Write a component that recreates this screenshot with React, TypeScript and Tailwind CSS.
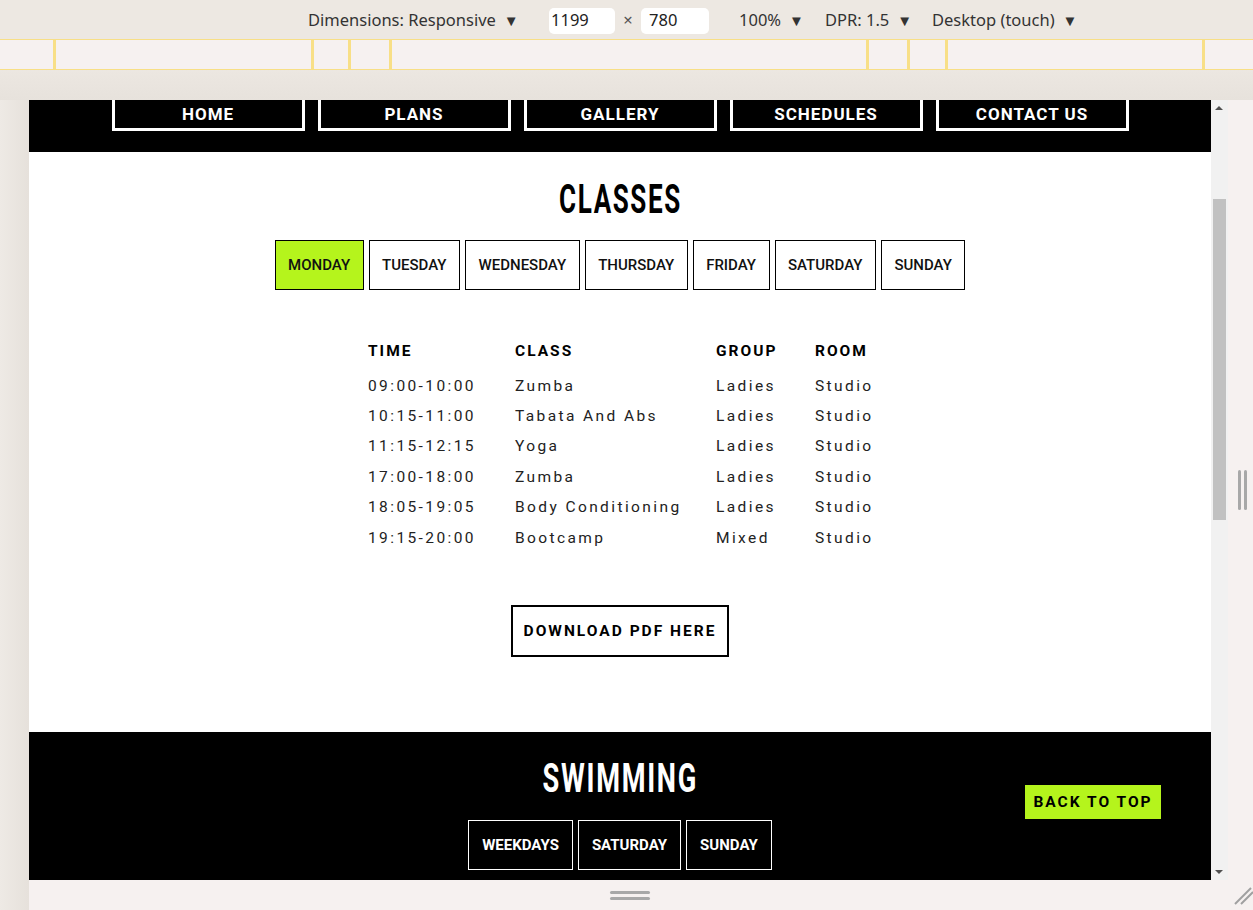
const navItems = ["HOME", "PLANS", "GALLERY", "SCHEDULES", "CONTACT US"];
const days = ["MONDAY", "TUESDAY", "WEDNESDAY", "THURSDAY", "FRIDAY", "SATURDAY", "SUNDAY"];
const rows = [
  ["09:00-10:00", "Zumba", "Ladies", "Studio"],
  ["10:15-11:00", "Tabata And Abs", "Ladies", "Studio"],
  ["11:15-12:15", "Yoga", "Ladies", "Studio"],
  ["17:00-18:00", "Zumba", "Ladies", "Studio"],
  ["18:05-19:05", "Body Conditioning", "Ladies", "Studio"],
  ["19:15-20:00", "Bootcamp", "Mixed", "Studio"],
];
const rulerMarks = [53, 311, 348, 389, 866, 907, 945, 1202];

function Caret() {
  return <span className="ml-[8px] text-[15px]">▼</span>;
}

function Toolbar() {
  return (
    <div className="flex h-[39px] items-center bg-[#ede8e2] pt-[2px] pl-[308px] font-['Noto_Sans',sans-serif] text-[16.5px] text-[#333]">
      <span className="w-[241px]">
        Dimensions: Responsive
        <Caret />
      </span>
      <span className="flex h-[26px] w-[66px] items-center rounded-[5px] bg-white pl-[2px] text-[#222]">1199</span>
      <span className="w-[26px] text-center text-[#555]">×</span>
      <span className="flex h-[26px] w-[68px] items-center rounded-[5px] bg-white pl-[8px] text-[#222]">780</span>
      <span className="ml-[30px] w-[86px]">
        100%
        <Caret />
      </span>
      <span className="w-[107px]">
        DPR: 1.5
        <Caret />
      </span>
      <span>
        Desktop (touch)
        <Caret />
      </span>
    </div>
  );
}

function Ruler() {
  return (
    <div className="relative h-[31px] border-y border-[#f8df86] bg-[#f6f1f0]">
      {rulerMarks.map((x) => (
        <div key={x} className="absolute top-0 h-full w-[2.5px] bg-[#f8df86]" style={{ left: x }} />
      ))}
    </div>
  );
}

function Classes() {
  return (
    <section className="flex flex-col items-center bg-white pt-[28px] pb-[75px]">
      <h2 className="inline-block h-[40px] scale-x-[0.65] font-['Roboto',sans-serif] text-[40px] leading-[40px] font-bold tracking-[2.5px] text-black">
        CLASSES
      </h2>
      <div className="mt-5 flex gap-[5px]">
        {days.map((d, i) => (
          <button
            key={d}
            className={`h-[50px] border border-black px-[12.5px] font-['Roboto',sans-serif] text-[15px] font-medium text-[#111] ${
              i === 0 ? "bg-[#b5f41c]" : "bg-white"
            }`}
          >
            {d}
          </button>
        ))}
      </div>
      <div className="mt-[50px] ml-[3px] font-['Roboto',sans-serif]">
        <div className="grid h-[24px] grid-cols-[147px_201px_99px_60px] items-center text-[15.5px] font-bold tracking-[2px] text-black">
          <span>TIME</span>
          <span>CLASS</span>
          <span>GROUP</span>
          <span>ROOM</span>
        </div>
        <div className="mt-[7px]">
          {rows.map((r) => (
            <div
              key={r[0] + r[1]}
              className="grid h-[30.4px] grid-cols-[147px_201px_99px_60px] items-center text-[15.5px] font-normal tracking-[2.4px] text-[#222]"
            >
              {r.map((c, i) => (
                <span key={i} className="whitespace-nowrap">
                  {c}
                </span>
              ))}
            </div>
          ))}
        </div>
      </div>
      <button className="mt-[52px] h-[52px] w-[218px] border-2 border-black font-['Roboto',sans-serif] text-[15.5px] font-bold tracking-[2px] text-black">
        DOWNLOAD PDF HERE
      </button>
    </section>
  );
}

function Swimming() {
  return (
    <section className="flex flex-col items-center bg-black pt-[27px] pb-10">
      <h2 className="inline-block h-[40px] scale-x-[0.68] font-['Roboto',sans-serif] text-[40px] leading-[40px] font-bold tracking-[2.5px] text-white">
        SWIMMING
      </h2>
      <div className="mt-[21px] flex gap-[5px]">
        {["WEEKDAYS", "SATURDAY", "SUNDAY"].map((d) => (
          <button
            key={d}
            className="h-[50px] border border-white px-[13px] font-['Roboto',sans-serif] text-[15px] font-bold text-white"
          >
            {d}
          </button>
        ))}
      </div>
    </section>
  );
}

function Scrollbar() {
  return (
    <div className="relative h-full w-[17px] bg-[#f1f1f1]">
      <div className="absolute top-[6px] left-[4px] h-0 w-0 border-x-[4.5px] border-b-[4px] border-x-transparent border-b-[#505050]" />
      <div className="absolute top-[99px] left-[2px] h-[321px] w-[13px] bg-[#c1c1c1]" />
      <div className="absolute bottom-[6px] left-[4px] h-0 w-0 border-x-[4.5px] border-t-[4px] border-x-transparent border-t-[#505050]" />
    </div>
  );
}

export default function App() {
  return (
    <div className="h-[910px] w-[1253px] overflow-hidden bg-[#ede8e2]">
      <Toolbar />
      <Ruler />
      <div className="h-[30px] bg-gradient-to-b from-[#ece7e1] to-[#e7e2dc]" />
      <div className="flex">
        <div className="w-[29px] bg-gradient-to-r from-[#eeeae5] to-[#e6e1db]" />
        <div className="flex flex-col bg-[#f6f1f0]">
          <div className="flex">
            <div className="relative h-[780px] w-[1182px] overflow-hidden bg-white">
              <nav className="flex h-[52px] items-end justify-center gap-[13px] bg-black pb-[21px]">
                {navItems.map((n) => (
                  <div
                    key={n}
                    className="flex h-[50px] w-[193px] items-end justify-center border-[3px] border-white pb-[1px] font-['Roboto',sans-serif] text-[17px] font-bold tracking-[1px] text-white"
                  >
                    {n}
                  </div>
                ))}
              </nav>
              <Classes />
              <Swimming />
              <a className="absolute top-[685px] left-[996px] flex h-[34px] w-[136px] items-center justify-center bg-[#b5f41c] pt-[2px] font-['Roboto',sans-serif] text-[15.5px] font-bold tracking-[2px] text-black">
                BACK TO TOP
              </a>
            </div>
            <Scrollbar />
            <div className="flex w-[25px] items-center justify-center gap-[3px] pl-[4px]">
              <div className="h-[40px] w-[3px] rounded-sm bg-[#a8a8a8]" />
              <div className="h-[40px] w-[3px] rounded-sm bg-[#a8a8a8]" />
            </div>
          </div>
          <div className="relative flex h-[30px] flex-col items-center justify-center gap-[3px] pr-[22px]">
            <div className="h-[3px] w-[40px] rounded-sm bg-[#a8a8a8]" />
            <div className="h-[3px] w-[40px] rounded-sm bg-[#a8a8a8]" />
            <svg className="absolute right-0 bottom-[4px]" width="20" height="20" viewBox="0 0 20 20">
              <line x1="2" y1="18" x2="18" y2="2" stroke="#a0a0a0" strokeWidth="2" />
              <line x1="8" y1="18" x2="20" y2="6" stroke="#a0a0a0" strokeWidth="2" />
            </svg>
          </div>
        </div>
      </div>
    </div>
  );
}
